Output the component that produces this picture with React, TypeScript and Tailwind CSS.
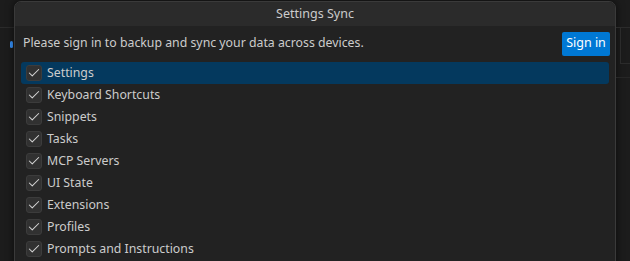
import { Check } from 'lucide-react'

const ITEMS = [
  'Settings',
  'Keyboard Shortcuts',
  'Snippets',
  'Tasks',
  'MCP Servers',
  'UI State',
  'Extensions',
  'Profiles',
  'Prompts and Instructions',
]

const font = { fontFamily: '"Noto Sans", "Open Sans", sans-serif' }

export default function App() {
  return (
    <div className="w-[630px] h-[261px] overflow-hidden bg-[#1c1c1c] flex" style={font}>
      {/* editor chrome peeking out on the left */}
      <div className="w-[14px] shrink-0 flex flex-col">
        <div className="h-[28px] border-b border-[#2b2b2b]" />
        <div className="flex justify-end pt-[13px] pr-[1px]">
          <div className="w-[3px] h-[7px] rounded-sm bg-[#3794ff]" />
        </div>
      </div>

      <div className="w-[602px] h-[270px] shrink-0 mt-[1px] rounded-t-[7px] border border-[#3a3a3a] bg-[#222222] shadow-[0_0_8px_rgba(0,0,0,0.6)] overflow-hidden">
        <div className="h-[24px] bg-[#2b2b2b] flex items-center justify-center text-[12.5px] text-[#cccccc]">
          Settings Sync
        </div>

        <div className="flex items-center justify-between pl-[8px] pr-[5px] pt-[5px] h-[30px]">
          <span className="text-[12.3px] text-[#cccccc]">Please sign in to backup and sync your data across devices.</span>
          <button className="h-[24px] w-[48px] rounded-[2px] bg-[#0078d4] text-white text-[12.5px] leading-none">
            Sign in
          </button>
        </div>

        <div className="flex flex-col px-[6px] pt-[6px]">
          {ITEMS.map((item, i) => (
            <div
              key={item}
              className={`h-[22px] flex items-center gap-[5px] pl-[5px] rounded-[3px] ${i === 0 ? 'bg-[#04395e]' : ''}`}
            >
              <span className="w-[16px] h-[16px] flex items-center justify-center rounded-[3px] border border-[#3c3c3c] bg-[#313131]">
                <Check className="w-[14px] h-[14px] text-[#d4d4d4]" strokeWidth={1.8} />
              </span>
              <span className="text-[12.3px] text-[#cccccc] leading-none">{item}</span>
            </div>
          ))}
        </div>
      </div>

      {/* editor chrome on the right */}
      <div className="flex-1 flex flex-col">
        <div className="h-[28px] border-b border-[#2b2b2b]" />
        <div className="h-[36px] border-b border-[#2b2b2b] ml-[4px] border-l" />
        <div className="h-[14px] border-b border-[#262626]" />
      </div>
    </div>
  )
}
